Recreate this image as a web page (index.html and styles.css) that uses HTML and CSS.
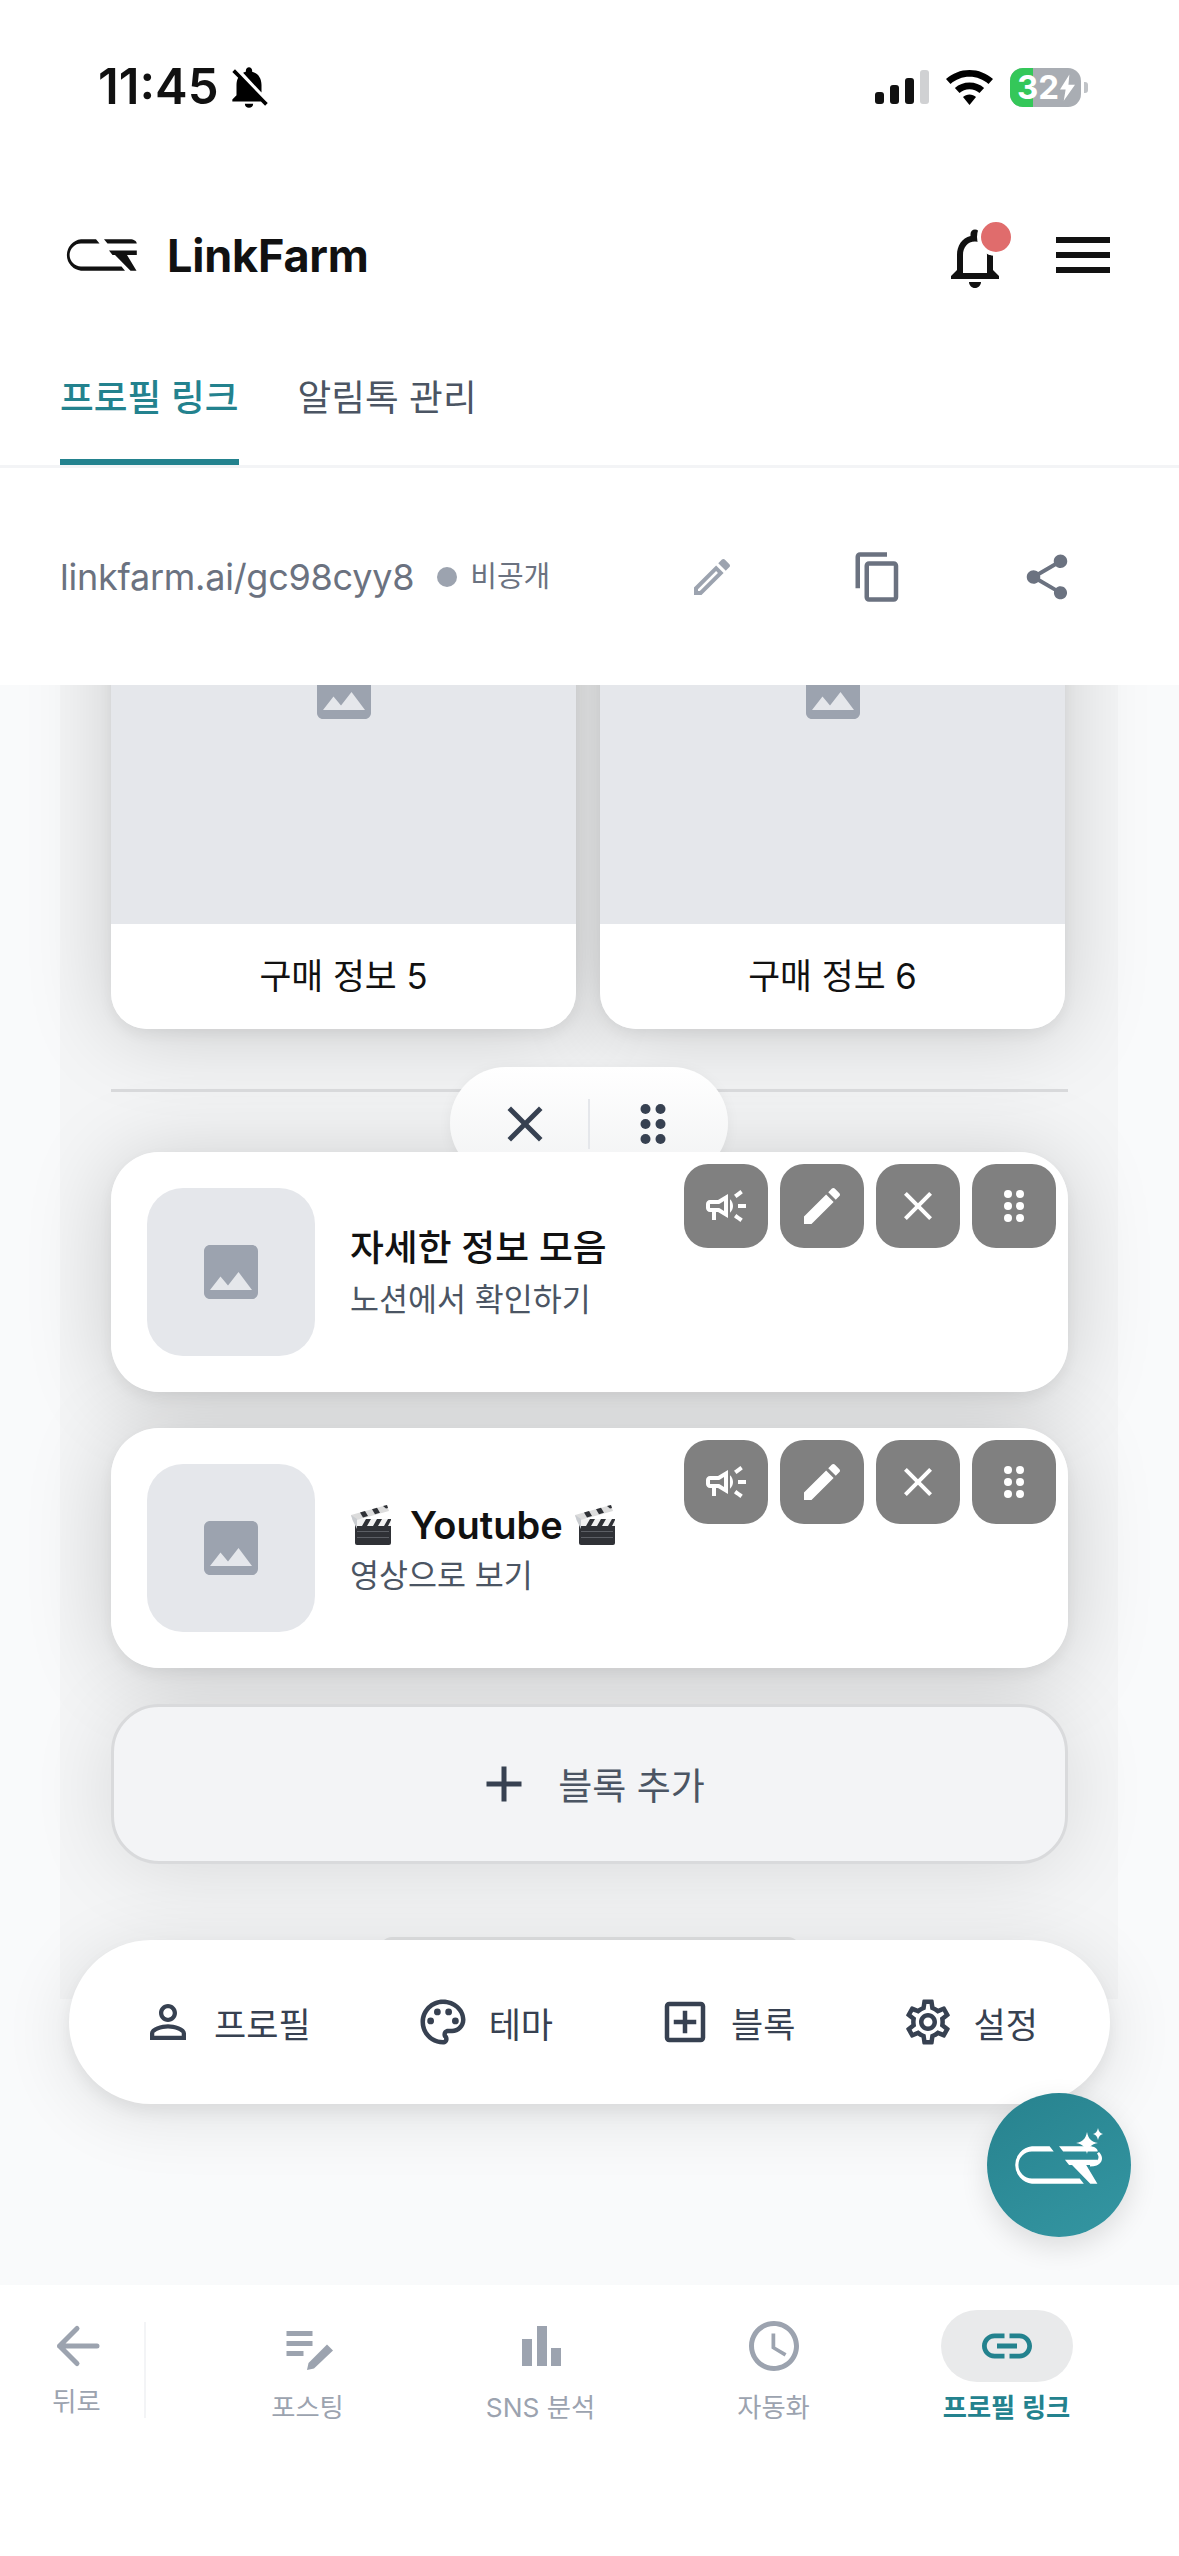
FILE: index.html
```html
<!DOCTYPE html>
<html lang="ko">
<head>
    <meta charset="UTF-8">
    <meta name="viewport" content="width=device-width, initial-scale=1.0">
    <title>LinkFarm</title>
    <link rel="stylesheet" href="styles.css">
</head>
<body>
    <svg class="sprites" width="0" height="0" aria-hidden="true">
        <symbol id="i-image" viewBox="0 0 24 24"><path d="M21 19V5c0-1.1-.9-2-2-2H5c-1.1 0-2 .9-2 2v14c0 1.1.9 2 2 2h14c1.1 0 2-.9 2-2zM8.5 13.5l2.5 3.01L14.5 12l4.5 6H5l3.5-4.5z"/></symbol>
        <symbol id="i-close" viewBox="0 0 24 24"><path d="M19 6.41L17.59 5 12 10.59 6.41 5 5 6.41 10.59 12 5 17.59 6.41 19 12 13.41 17.59 19 19 17.59 13.41 12z"/></symbol>
        <symbol id="i-drag" viewBox="0 0 24 24"><circle cx="9" cy="6" r="2"/><circle cx="15" cy="6" r="2"/><circle cx="9" cy="12" r="2"/><circle cx="15" cy="12" r="2"/><circle cx="9" cy="18" r="2"/><circle cx="15" cy="18" r="2"/></symbol>
        <symbol id="i-edit" viewBox="0 0 24 24"><path d="M3 17.25V21h3.75L17.81 9.94l-3.75-3.75L3 17.25zM20.71 7.04c.39-.39.39-1.02 0-1.41l-2.34-2.34c-.39-.39-1.02-.39-1.41 0l-1.83 1.83 3.75 3.75 1.83-1.83z"/></symbol>
        <symbol id="i-campaign" viewBox="0 0 24 24"><path d="M18 11v2h4v-2h-4zm-2 6.61c.96.71 2.21 1.65 3.2 2.39.4-.53.8-1.07 1.2-1.6-.99-.74-2.24-1.68-3.2-2.4-.4.54-.8 1.08-1.2 1.61zM20.4 5.6c-.4-.53-.8-1.07-1.2-1.6-.99.74-2.24 1.68-3.2 2.4.4.53.8 1.07 1.2 1.6.96-.72 2.21-1.65 3.2-2.4zM4 9c-1.1 0-2 .9-2 2v2c0 1.1.9 2 2 2h1v4h2v-4h1l5 3V6L8 9H4zm5.03 1.71L11 9.53v4.94l-1.97-1.18-.48-.29H4v-2h4.55l.48-.29zM15.5 12c0-1.33-.58-2.53-1.5-3.35v6.69c.92-.81 1.5-2.01 1.5-3.34z"/></symbol>
        <symbol id="i-clapper" viewBox="0 0 40 40">
            <path fill="#2f3136" d="M4 19h36v19a2 2 0 0 1-2 2H6a2 2 0 0 1-2-2z"/>
            <path fill="#5c5f65" d="M6 26h32v1H6zM6 32h32v1H6z"/>
            <path fill="#f2f2f2" d="M5 14h35v7H5z"/>
            <path fill="#2f3136" d="M11 21l4-7h5l-4 7zM22 21l4-7h5l-4 7zM33 21l4-7h3v1l-3 6z"/>
            <path fill="#dcdcdc" d="M0 10L36 0l2 6L2 16z"/>
            <path fill="#2f3136" d="M9 7.500l5-1.400 3 5-5 1.400zM21 4.200l5-1.400 3 5-5 1.400zM32 1.100l4-1.100 1 3-2 .6z"/>
            <path fill="#c9ccd0" d="M0 10l2 6 4 8V14z"/>
        </symbol>
        <symbol id="i-logo" viewBox="0 0 72 32">
            <path d="M31 .2H16a15.9 15.9 0 0 0 0 31.6h44l-3.5-4.4H16a11.4 11.4 0 0 1 0-22.8h18.500z"/>
            <path d="M39 .2h26c3.800 0 6.500 1.800 6.800 4.400H42.500z"/>
            <path d="M44 11.500h27.800v4.400H62l9.500 15.900h-6L50 15.900h-2.500z"/>
        </symbol>
    </svg>

    <div class="status-bar">
        <div class="status-left">
            <span class="time">11:45</span>
            <svg class="mute-icon" viewBox="0 0 24 24"><path d="M20 18.69L7.84 6.14 5.27 3.49 4 4.76l2.8 2.8v.01c-.52.99-.8 2.16-.8 3.42v5l-2 2v1h13.73l2 2L21 19.72l-1-1.03zM12 22c1.11 0 2-.89 2-2h-4c0 1.11.89 2 2 2zm6-7.32V11c0-3.08-1.64-5.64-4.5-6.32V4c0-.83-.67-1.5-1.5-1.5s-1.5.67-1.5 1.5v.68c-.15.03-.29.08-.42.12-.1.03-.2.07-.3.11h-.01c-.2.08-.4.17-.59.27-.01 0-.01 0-.02.01L18 14.68z"/></svg>
        </div>
        <div class="status-right">
            <div class="signal">
                <span class="bar bar-1"></span>
                <span class="bar bar-2"></span>
                <span class="bar bar-3"></span>
                <span class="bar bar-4"></span>
            </div>
            <svg class="wifi-icon" viewBox="0 0 47 35">
                <path d="M23.500 0C14.500 0 6.500 3.400 0 9l4.500 5C9.700 9.500 16.300 6.800 23.500 6.800S37.300 9.500 42.500 14l4.500-5C40.500 3.400 32.500 0 23.500 0z"/>
                <path d="M23.500 12.500c-5.600 0-10.600 2-14.600 5.400l4.600 5.100c2.700-2.300 6.200-3.700 10-3.700s7.300 1.400 10 3.700l4.600-5.100c-4-3.400-9-5.400-14.600-5.400z"/>
                <path d="M23.500 24.500c-2.500 0-4.800.9-6.500 2.400L23.500 35 30 26.900c-1.700-1.500-4-2.400-6.500-2.400z"/>
            </svg>
            <div class="battery">
                <div class="battery-body">
                    <span class="battery-fill"></span>
                    <span class="battery-text">32</span>
                    <svg class="bolt" viewBox="0 0 16 28"><path d="M10 0L0 16h6l-2 12L16 11H9z"/></svg>
                </div>
                <span class="battery-nub"></span>
            </div>
        </div>
    </div>

    <div class="header">
        <div class="brand">
            <svg class="brand-logo"><use href="#i-logo"/></svg>
            <span class="brand-name">LinkFarm</span>
        </div>
        <div class="header-actions">
            <div class="bell">
                <svg class="bell-icon" viewBox="0 0 24 24"><path d="M12 22c1.100 0 2-.9 2-2h-4c0 1.100.9 2 2 2zm6-6v-5c0-3.070-1.630-5.640-4.500-6.320V4c0-.83-.67-1.500-1.500-1.500s-1.500.67-1.500 1.500v.68C7.640 5.360 6 7.920 6 11v5l-2 2v1h16v-1l-2-2zm-2 1H8v-6c0-2.480 1.510-4.500 4-4.500s4 2.020 4 4.500v6z"/></svg>
                <span class="bell-dot"></span>
            </div>
            <div class="burger"><span></span><span></span><span></span></div>
        </div>
    </div>

    <div class="tabs">
        <div class="tab active">프로필 링크</div>
        <div class="tab">알림톡 관리</div>
    </div>

    <div class="url-bar">
        <span class="url">linkfarm.ai/gc98cyy8</span>
        <span class="visibility"><span class="visibility-dot"></span>비공개</span>
        <div class="url-actions">
            <svg class="url-icon edit-outline" viewBox="0 0 24 24"><path d="M14.060 9.020l.92.92L5.920 19H5v-.92l9.060-9.060M17.660 3c-.25 0-.51.1-.7.29l-1.830 1.830 3.750 3.750 1.830-1.830c.39-.39.39-1.020 0-1.410l-2.340-2.340c-.2-.2-.45-.29-.71-.29zm-3.600 3.190L3 17.250V21h3.750L17.810 9.940l-3.750-3.750z"/></svg>
            <svg class="url-icon" viewBox="0 0 24 24"><path d="M16 1H4c-1.100 0-2 .9-2 2v14h2V3h12V1zm3 4H8c-1.100 0-2 .9-2 2v14c0 1.100.9 2 2 2h11c1.100 0 2-.9 2-2V7c0-1.100-.9-2-2-2zm0 16H8V7h11v14z"/></svg>
            <svg class="url-icon" viewBox="0 0 24 24"><path d="M18 16.080c-.76 0-1.440.3-1.960.77L8.910 12.700c.05-.23.09-.46.09-.7s-.04-.47-.09-.7l7.050-4.110c.54.5 1.250.81 2.040.81 1.660 0 3-1.340 3-3s-1.340-3-3-3-3 1.340-3 3c0 .24.04.47.09.7L8.040 9.810C7.500 9.310 6.790 9 6 9c-1.660 0-3 1.340-3 3s1.340 3 3 3c.79 0 1.500-.31 2.040-.81l7.120 4.160c-.05.21-.08.43-.08.65 0 1.610 1.310 2.920 2.920 2.920 1.610 0 2.920-1.310 2.920-2.920s-1.310-2.920-2.920-2.920z"/></svg>
        </div>
    </div>

    <div class="main">
        <div class="panel">
            <div class="grid">
                <div class="grid-card">
                    <div class="grid-image"><svg class="image-icon"><use href="#i-image"/></svg></div>
                    <div class="grid-label">구매 정보 5</div>
                </div>
                <div class="grid-card">
                    <div class="grid-image"><svg class="image-icon"><use href="#i-image"/></svg></div>
                    <div class="grid-label">구매 정보 6</div>
                </div>
            </div>

            <div class="divider">
                <div class="divider-pill">
                    <svg class="pill-icon"><use href="#i-close"/></svg>
                    <span class="pill-sep"></span>
                    <svg class="pill-icon"><use href="#i-drag"/></svg>
                </div>
            </div>

            <div class="block">
                <div class="thumb"><svg class="image-icon"><use href="#i-image"/></svg></div>
                <div class="block-text">
                    <div class="block-title block-title-ko">자세한 정보 모음</div>
                    <div class="block-sub">노션에서 확인하기</div>
                </div>
                <div class="block-tools">
                    <span class="tool"><svg><use href="#i-campaign"/></svg></span>
                    <span class="tool"><svg><use href="#i-edit"/></svg></span>
                    <span class="tool"><svg><use href="#i-close"/></svg></span>
                    <span class="tool"><svg><use href="#i-drag"/></svg></span>
                </div>
            </div>

            <div class="block">
                <div class="thumb"><svg class="image-icon"><use href="#i-image"/></svg></div>
                <div class="block-text">
                    <div class="block-title">
                        <svg class="clapper"><use href="#i-clapper"/></svg>
                        <span class="youtube">Youtube</span>
                        <svg class="clapper"><use href="#i-clapper"/></svg>
                    </div>
                    <div class="block-sub">영상으로 보기</div>
                </div>
                <div class="block-tools">
                    <span class="tool"><svg><use href="#i-campaign"/></svg></span>
                    <span class="tool"><svg><use href="#i-edit"/></svg></span>
                    <span class="tool"><svg><use href="#i-close"/></svg></span>
                    <span class="tool"><svg><use href="#i-drag"/></svg></span>
                </div>
            </div>

            <div class="add-block">
                <svg class="add-icon" viewBox="0 0 24 24"><path d="M19 13h-6v6h-2v-6H5v-2h6V5h2v6h6v2z"/></svg>
                <span>블록 추가</span>
            </div>

            <div class="panel-foot"></div>
        </div>

        <div class="toolbar">
            <div class="toolbar-item">
                <svg viewBox="0 0 24 24"><path d="M12 5.900c1.160 0 2.100.94 2.100 2.100s-.94 2.100-2.100 2.100S9.900 9.160 9.900 8s.94-2.100 2.100-2.100m0 9c2.970 0 6.100 1.460 6.100 2.100v1.100H5.900V17c0-.64 3.130-2.100 6.100-2.100M12 4C9.790 4 8 5.790 8 8s1.790 4 4 4 4-1.790 4-4-1.790-4-4-4zm0 9c-2.670 0-8 1.340-8 4v3h16v-3c0-2.660-5.330-4-8-4z"/></svg>
                <span>프로필</span>
            </div>
            <div class="toolbar-item">
                <svg viewBox="0 0 24 24"><path d="M12 22C6.490 22 2 17.510 2 12S6.490 2 12 2s10 4.040 10 9c0 3.310-2.690 6-6 6h-1.770c-.28 0-.5.22-.5.5 0 .12.05.23.13.33.41.47.64 1.060.64 1.670 0 1.380-1.120 2.500-2.500 2.500zm0-18c-4.410 0-8 3.590-8 8s3.590 8 8 8c.28 0 .5-.22.5-.5 0-.16-.08-.28-.14-.35-.41-.46-.63-1.050-.63-1.650 0-1.380 1.120-2.500 2.500-2.500H16c2.210 0 4-1.790 4-4 0-3.860-3.590-7-8-7z"/><circle cx="6.500" cy="11.500" r="1.500"/><circle cx="9.500" cy="7.500" r="1.500"/><circle cx="14.500" cy="7.500" r="1.500"/><circle cx="17.500" cy="11.500" r="1.500"/></svg>
                <span>테마</span>
            </div>
            <div class="toolbar-item">
                <svg viewBox="0 0 24 24"><path d="M19 3H5c-1.110 0-2 .9-2 2v14c0 1.100.89 2 2 2h14c1.100 0 2-.9 2-2V5c0-1.100-.9-2-2-2zm0 16H5V5h14v14zm-8-2h2v-4h4v-2h-4V7h-2v4H7v2h4z"/></svg>
                <span>블록</span>
            </div>
            <div class="toolbar-item">
                <svg viewBox="0 0 24 24"><path d="M19.430 12.980c.04-.32.07-.64.07-.98 0-.34-.03-.66-.07-.98l2.110-1.650c.19-.15.24-.42.12-.64l-2-3.460c-.09-.16-.26-.25-.44-.25-.06 0-.12.01-.17.03l-2.490 1c-.52-.4-1.080-.73-1.690-.98l-.38-2.650C14.460 2.180 14.250 2 14 2h-4c-.25 0-.46.18-.49.42l-.38 2.650c-.61.25-1.170.59-1.690.98l-2.490-1c-.06-.02-.12-.03-.18-.03-.17 0-.34.09-.43.25l-2 3.460c-.13.22-.07.49.12.64l2.110 1.650c-.04.32-.07.65-.07.98 0 .33.03.66.07.98l-2.110 1.650c-.19.15-.24.42-.12.64l2 3.460c.09.16.26.25.44.25.06 0 .12-.01.17-.03l2.490-1c.52.4 1.080.73 1.690.98l.38 2.650c.03.24.24.42.49.42h4c.25 0 .46-.18.49-.42l.38-2.650c.61-.25 1.170-.59 1.690-.98l2.490 1c.06.02.12.03.18.03.17 0 .34-.09.43-.25l2-3.460c.12-.22.07-.49-.12-.64l-2.110-1.650zm-1.980-1.710c.04.31.05.52.05.73 0 .21-.02.43-.05.73l-.14 1.130.89.7 1.080.84-.7 1.210-1.270-.51-1.040-.42-.9.68c-.43.32-.84.56-1.250.73l-1.060.43-.16 1.130-.2 1.350h-1.400l-.19-1.350-.16-1.130-1.060-.43c-.43-.18-.83-.41-1.230-.71l-.91-.7-1.060.43-1.270.51-.7-1.210 1.080-.84.89-.7-.14-1.130c-.03-.31-.05-.54-.05-.74s.02-.43.05-.73l.14-1.130-.89-.7-1.080-.84.7-1.210 1.270.51 1.040.42.9-.68c.43-.32.84-.56 1.250-.73l1.060-.43.16-1.130.2-1.350h1.390l.19 1.350.16 1.130 1.060.43c.43.18.83.41 1.230.71l.91.7 1.060-.43 1.270-.51.7 1.210-1.070.85-.89.7.14 1.130zM12 8c-2.210 0-4 1.790-4 4s1.790 4 4 4 4-1.790 4-4-1.790-4-4-4zm0 6c-1.100 0-2-.9-2-2s.9-2 2-2 2 .9 2 2-.9 2-2 2z"/></svg>
                <span>설정</span>
            </div>
        </div>

        <div class="fab">
            <svg class="fab-logo" viewBox="0 0 92 62">
                <use href="#i-logo" x="0" y="17" width="85" height="40"/>
                <path d="M74 4c1.500 7 4 9.500 11 11-7 1.500-9.500 4-11 11-1.500-7-4-9.500-11-11 7-1.500 9.500-4 11-11z"/>
                <path d="M85 0c.7 3.500 2 5 5 6-3 1-4.300 2.500-5 6-.7-3.500-2-5-5-6 3-1 4.300-2.500 5-6z"/>
                <path d="M86 24c3 3 4 7 2 10s-6 4.500-11 4.500v-3.500c4 0 7-1 8-3.500s.5-4-1-6z"/>
            </svg>
        </div>
    </div>

    <div class="bottom-nav">
        <div class="nav-back">
            <svg class="back-icon" viewBox="0 0 24 24"><path d="M20 12H5M12 5l-7 7 7 7" fill="none" stroke-width="2" stroke-linecap="round" stroke-linejoin="round"/></svg>
            <span>뒤로</span>
        </div>
        <div class="nav-items">
            <div class="nav-item">
                <div class="nav-icon">
                    <svg viewBox="0 0 24 24"><path d="M3.400 6h10.400v2H3.400zM3.400 10h10.400v2H3.400zM3.400 14h6.800v2H3.400z"/><path d="M19.600 11.400l2.400 2.400-7.600 7.200-2.800.6.6-2.800z"/></svg>
                </div>
                <span>포스팅</span>
            </div>
            <div class="nav-item">
                <div class="nav-icon">
                    <svg viewBox="0 0 24 24"><rect x="4.400" y="9.200" width="4" height="10.800"/><rect x="10.400" y="4" width="4" height="16"/><rect x="16" y="12.800" width="4" height="7.200"/></svg>
                </div>
                <span>SNS 분석</span>
            </div>
            <div class="nav-item">
                <div class="nav-icon">
                    <svg viewBox="0 0 24 24"><path d="M11.990 2C6.470 2 2 6.480 2 12s4.470 10 9.990 10C17.520 22 22 17.520 22 12S17.520 2 11.990 2zM12 20c-4.420 0-8-3.580-8-8s3.580-8 8-8 8 3.580 8 8-3.580 8-8 8zm.5-13H11v6l5.250 3.150.75-1.230-4.500-2.670z"/></svg>
                </div>
                <span>자동화</span>
            </div>
            <div class="nav-item active">
                <div class="nav-icon">
                    <svg viewBox="0 0 24 24"><path d="M3.900 12c0-1.710 1.390-3.100 3.100-3.100h4V7H7c-2.760 0-5 2.240-5 5s2.240 5 5 5h4v-1.900H7c-1.710 0-3.100-1.390-3.100-3.100zM8 13h8v-2H8v2zm9-6h-4v1.900h4c1.710 0 3.100 1.390 3.100 3.100s-1.390 3.100-3.100 3.100h-4V17h4c2.760 0 5-2.240 5-5s-2.240-5-5-5z"/></svg>
                </div>
                <span>프로필 링크</span>
            </div>
        </div>
    </div>
</body>
</html>
```

FILE: styles.css
```css
* {
    box-sizing: border-box;
}
html, body {
    margin: 0;
    padding: 0;
}
body {
    width: 1179px;
    height: 2556px;
    overflow: hidden;
    display: flex;
    flex-direction: column;
    background: #ffffff;
    color: #111111;
    font-family: Inter, "Noto Sans CJK KR", sans-serif;
}
.sprites {
    position: absolute;
}
svg {
    display: block;
    flex-shrink: 0;
}

/* status bar */
.status-bar {
    height: 174px;
    flex-shrink: 0;
    display: flex;
    align-items: center;
    justify-content: space-between;
    padding: 0 91px 0 98px;
}
.status-left {
    display: flex;
    align-items: center;
    gap: 5px;
}
.time {
    font-size: 49px;
    font-weight: 600;
    line-height: 56px;
}
.mute-icon {
    width: 50px;
    height: 50px;
}
.status-right {
    display: flex;
    align-items: center;
}
.signal {
    display: flex;
    align-items: flex-end;
    gap: 6px;
    height: 34px;
}
.bar {
    width: 9px;
    background: #111111;
    border-radius: 3px;
}
.bar-1 { height: 12px; }
.bar-2 { height: 19px; }
.bar-3 { height: 26px; }
.bar-4 { height: 34px; background: #d0d1d3; }
.wifi-icon {
    width: 47px;
    height: 35px;
    margin-left: 17px;
}
.battery {
    display: flex;
    align-items: center;
    margin-left: 17px;
}
.battery-body {
    position: relative;
    width: 71px;
    height: 39px;
    border-radius: 13px;
    overflow: hidden;
    background: #a9adb3;
    color: #ffffff;
    display: flex;
    align-items: center;
    padding-left: 7px;
}
.battery-fill {
    position: absolute;
    left: 0;
    top: 0;
    bottom: 0;
    width: 23px;
    background: #34c759;
}
.battery-text {
    position: relative;
    font-size: 33px;
    font-weight: 700;
    line-height: 39px;
}
.bolt {
    position: relative;
    width: 15px;
    height: 27px;
    fill: #ffffff;
    margin-left: 1px;
}
.battery-nub {
    width: 4px;
    height: 11px;
    margin-left: 3px;
    background: #c0c3c7;
    border-radius: 0 3px 3px 0;
}

/* header */
.header {
    height: 162px;
    flex-shrink: 0;
    display: flex;
    align-items: center;
    justify-content: space-between;
    padding: 0 69px 0 65px;
}
.brand {
    display: flex;
    align-items: center;
    gap: 30px;
}
.brand-logo {
    width: 72px;
    height: 32px;
    fill: #111111;
}
.brand-name {
    margin-top: 2px;
    font-size: 45px;
    font-weight: 700;
    letter-spacing: -0.2px;
    line-height: 54px;
    color: #111111;
}
.header-actions {
    display: flex;
    align-items: center;
    gap: 45px;
}
.bell {
    position: relative;
    width: 72px;
    height: 72px;
    margin-top: 6px;
}
.bell-icon {
    width: 72px;
    height: 72px;
    fill: #111111;
}
.bell-dot {
    position: absolute;
    left: 38px;
    top: -4px;
    width: 38px;
    height: 38px;
    border-radius: 50%;
    background: #e06c6c;
    border: 4px solid #ffffff;
}
.burger {
    width: 54px;
    display: flex;
    flex-direction: column;
    gap: 9px;
}
.burger span {
    height: 6px;
    background: #111111;
}

/* tabs */
.tabs {
    height: 132px;
    flex-shrink: 0;
    display: flex;
    gap: 59px;
    padding: 0 60px;
    border-bottom: 3px solid #f3f4f6;
}
.tab {
    height: 129px;
    padding-top: 40px;
    border-bottom: 6px solid transparent;
    font-size: 36.7px;
    line-height: 44px;
    color: #4b5563;
}
.tab.active {
    color: #23828e;
    font-weight: 500;
    border-bottom-color: #23828e;
}

/* url row */
.url-bar {
    height: 217px;
    flex-shrink: 0;
    display: flex;
    align-items: center;
    padding: 0 105px 0 60px;
    color: #6b7280;
}
.url {
    font-size: 36px;
    letter-spacing: -0.25px;
    line-height: 44px;
}
.visibility {
    display: flex;
    align-items: center;
    gap: 13px;
    margin-left: 23px;
    font-size: 29px;
    line-height: 40px;
}
.visibility-dot {
    width: 20px;
    height: 20px;
    border-radius: 50%;
    background: #9ca3af;
}
.url-actions {
    margin-left: auto;
    display: flex;
    align-items: center;
    gap: 115px;
}
.url-icon {
    width: 54px;
    height: 54px;
    fill: #6b7280;
}
.edit-outline {
    fill: #9ca3af;
    width: 48px;
    height: 48px;
}

/* scrolled content */
.main {
    position: relative;
    flex: 1;
    overflow: hidden;
    background: #f9fafb;
}
/* card shadows sit on ::before at z-index -1 so they never fall on a neighbour card */
.panel {
    isolation: isolate;
    width: 1058px;
    height: 1540px;
    margin: -226px 0 0 60px;
    padding: 0 50px 0 51px;
    background: rgba(0, 0, 0, 0.018);
}
.grid {
    display: grid;
    grid-template-columns: 465px 465px;
    gap: 24px;
}
.grid-card {
    position: relative;
    background: #ffffff;
    border-radius: 36px;
}
.grid-card::before,
.block::before,
.add-block::before {
    content: "";
    position: absolute;
    inset: 0;
    z-index: -1;
    border-radius: inherit;
    box-shadow: 0 6px 85px rgba(0, 0, 0, 0.17), 0 6px 14px rgba(0, 0, 0, 0.06);
}
.add-block::before {
    box-shadow: 0 6px 85px rgba(0, 0, 0, 0.12);
}
.grid-image {
    height: 465px;
    display: flex;
    align-items: center;
    justify-content: center;
    background: #e5e7eb;
    border-radius: 36px 36px 0 0;
}
.image-icon {
    width: 72px;
    height: 72px;
    fill: #9ca3af;
}
.grid-label {
    height: 105px;
    padding-bottom: 5px;
    display: flex;
    align-items: center;
    justify-content: center;
    font-size: 34.7px;
    color: #111111;
}
.divider {
    position: relative;
    height: 3px;
    margin: 60px 0;
    background: #d8d9db;
}
.divider-pill {
    position: absolute;
    left: 339px;
    top: -22px;
    width: 278px;
    height: 112px;
    display: flex;
    align-items: flex-start;
    justify-content: center;
    gap: 33px;
    padding-top: 27px;
    border-radius: 56px;
    background: linear-gradient(#ffffff, #f1f2f3);
    box-shadow: 0 2px 14px rgba(0, 0, 0, 0.05);
}
.pill-icon {
    width: 60px;
    height: 60px;
    fill: #374151;
}
.pill-sep {
    width: 2px;
    height: 50px;
    margin-top: 5px;
    background: #e5e7eb;
}
.block {
    position: relative;
    height: 240px;
    margin-bottom: 36px;
    padding: 36px;
    display: flex;
    align-items: center;
    gap: 35px;
    background: #ffffff;
    border-radius: 48px;
}
.thumb {
    width: 168px;
    height: 168px;
    display: flex;
    align-items: center;
    justify-content: center;
    background: #e5e7eb;
    border-radius: 36px;
}
.block-title {
    display: flex;
    align-items: center;
    height: 48px;
    font-size: 36.8px;
    font-weight: 500;
    color: #111111;
}
.block-title-ko {
    padding-bottom: 8px;
}
.youtube {
    margin: 0 12px 0 19px;
    font-size: 38px;
    font-weight: 600;
}
.clapper {
    width: 40px;
    height: 40px;
}
.clapper:first-child {
    margin-left: 1px;
}
.block-sub {
    margin-top: 7px;
    font-size: 31.5px;
    line-height: 40px;
    color: #4b5563;
}
.block-tools {
    position: absolute;
    top: 12px;
    right: 12px;
    display: flex;
    gap: 12px;
}
.tool {
    width: 84px;
    height: 84px;
    display: flex;
    align-items: center;
    justify-content: center;
    background: #808080;
    border-radius: 24px;
}
.tool svg {
    width: 48px;
    height: 48px;
    fill: #ffffff;
}
.add-block {
    position: relative;
    height: 160px;
    margin-top: 1px;
    display: flex;
    align-items: center;
    justify-content: center;
    gap: 24px;
    background: #f3f4f6;
    border: 3px solid #d9dadc;
    border-radius: 48px;
    font-size: 37px;
    color: #4b5563;
}
.add-icon {
    width: 60px;
    height: 60px;
    fill: #374151;
}
.panel-foot {
    width: 420px;
    height: 30px;
    margin: 73px 0 0 269px;
    background: #e0e1e2;
    border-radius: 12px 12px 0 0;
}

/* floating toolbar */
.toolbar {
    position: absolute;
    left: 69px;
    top: 1255px;
    width: 1041px;
    height: 164px;
    display: flex;
    align-items: center;
    justify-content: space-between;
    padding: 0 72px;
    background: #ffffff;
    border-radius: 82px;
    box-shadow: 0 10px 70px rgba(0, 0, 0, 0.11), 0 8px 16px rgba(0, 0, 0, 0.06);
}
.toolbar-item {
    display: flex;
    align-items: center;
    gap: 19px;
    font-size: 35px;
    color: #374151;
}
.toolbar-item svg {
    width: 54px;
    height: 54px;
    fill: #374151;
}
.fab {
    position: absolute;
    left: 987px;
    top: 1408px;
    width: 144px;
    height: 144px;
    display: flex;
    align-items: center;
    justify-content: center;
    border-radius: 50%;
    background: linear-gradient(150deg, #27828e, #3496a2);
    box-shadow: 0 10px 28px rgba(0, 0, 0, 0.12);
}
.fab-logo {
    width: 92px;
    height: 62px;
    fill: #ffffff;
    margin: -12px 0 0 0;
}

/* bottom navigation */
.bottom-nav {
    height: 271px;
    flex-shrink: 0;
    display: flex;
    align-items: flex-start;
    background: #ffffff;
    color: #9ca3af;
    font-size: 26.3px;
    line-height: 30px;
}
.nav-back {
    width: 146px;
    height: 96px;
    margin-top: 37px;
    padding-left: 9px;
    display: flex;
    flex-direction: column;
    align-items: center;
    border-right: 2px solid #f3f4f6;
    color: #9ca3af;
}
.back-icon {
    width: 60px;
    height: 60px;
    margin-top: -6px;
    stroke: #9ca3af;
}
.nav-back span {
    margin-top: 11px;
}
.nav-items {
    display: grid;
    grid-template-columns: repeat(4, 233px);
    margin: 25px 0 0 45px;
}
.nav-item {
    display: flex;
    flex-direction: column;
    align-items: center;
}
.nav-item span {
    margin-top: 11px;
}
.nav-icon {
    width: 132px;
    height: 72px;
    display: flex;
    align-items: center;
    justify-content: center;
    border-radius: 36px;
}
.nav-icon svg {
    width: 60px;
    height: 60px;
    fill: #9ca3af;
}
.nav-item.active {
    color: #23828e;
    font-weight: 600;
}
.nav-item.active .nav-icon {
    background: #e9eaeb;
}
.nav-item.active svg {
    fill: #23828e;
}
```
